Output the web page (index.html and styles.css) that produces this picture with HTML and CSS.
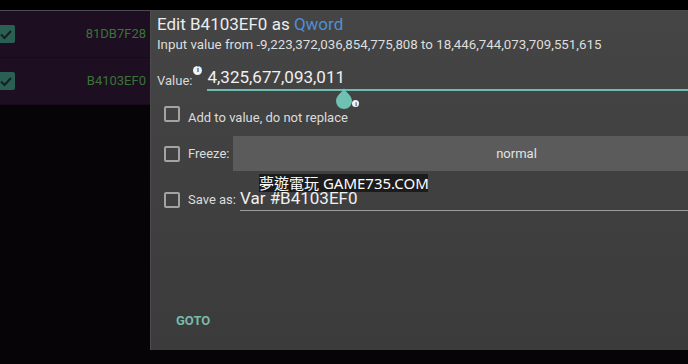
FILE: index.html
```html
<!DOCTYPE html>
<html lang="en">
<head>
    <meta charset="UTF-8">
    <meta name="viewport" content="width=device-width, initial-scale=1.0">
    <link rel="stylesheet" href="styles.css">
    <title>Edit value</title>
</head>
<body>
    <div class="screen">
        <div class="topbar"></div>

        <div class="list">
            <div class="row">
                <span class="tick">
                    <svg width="18" height="18" viewBox="0 0 18 18"><path d="M4 9.5 L7.5 13 L14 6" fill="none" stroke="#16201d" stroke-width="2"/></svg>
                </span>
                <span class="addr">81DB7F28</span>
            </div>
            <div class="row">
                <span class="tick">
                    <svg width="18" height="18" viewBox="0 0 18 18"><path d="M4 9.5 L7.5 13 L14 6" fill="none" stroke="#16201d" stroke-width="2"/></svg>
                </span>
                <span class="addr">B4103EF0</span>
            </div>
        </div>

        <div class="dialog">
            <h1 class="title">Edit B4103EF0 as <span class="type">Qword</span></h1>
            <p class="range">Input value from -9,223,372,036,854,775,808 to 18,446,744,073,709,551,615</p>

            <div class="value-row">
                <span class="value-label">Value:</span>
                <span class="info">i</span>
                <div class="value-field">
                    4,325,677,093,011
                    <svg class="handle" width="18" height="22" viewBox="0 0 18 22"><path d="M9 0 C10 4 17 7 17 13 A8 8 0 0 1 1 13 C1 7 8 4 9 0 Z" fill="#6fc1b2"/></svg>
                    <span class="info small">i</span>
                </div>
            </div>

            <div class="check-row add-row">
                <span class="box"></span>
                <span class="check-label">Add to value, do not replace</span>
            </div>

            <div class="check-row freeze-row">
                <span class="box"></span>
                <span class="check-label">Freeze:</span>
                <div class="spinner">normal</div>
            </div>

            <div class="check-row save-row">
                <span class="box"></span>
                <span class="check-label">Save as:</span>
                <div class="save-field">Var #B4103EF0</div>
            </div>

            <div class="actions">
                <span class="goto">GOTO</span>
            </div>
        </div>

        <div class="watermark">夢遊電玩 GAME735.COM</div>
    </div>
</body>
</html>
```

FILE: styles.css
```css
body {
    margin: 0;
    padding: 0;
    background-color: #000;
    font-family: Roboto, "Noto Sans", sans-serif;
    overflow: hidden;
}

.screen {
    position: relative;
    width: 688px;
    height: 364px;
    overflow: hidden;
    background-color: #070407;
}

.topbar {
    height: 10px;
    background-color: #000;
    border-bottom: 1px solid #4e4a50;
}

.list {
    background-color: #1e0e22;
}

.row {
    display: flex;
    align-items: center;
    width: 150px;
    height: 46px;
    border-bottom: 1px solid #170a1a;
}

.tick {
    display: flex;
    width: 18px;
    height: 18px;
    margin-left: -3px;
    background-color: #2a5f54;
    border-radius: 2px;
}

.addr {
    margin-left: auto;
    padding-right: 4px;
    font-size: 13px;
    line-height: 16px;
    color: #3a7436;
}

.dialog {
    position: absolute;
    left: 150px;
    top: 11px;
    width: 700px;
    height: 339px;
    box-sizing: border-box;
    padding: 3px 0 21px 6px;
    display: flex;
    flex-direction: column;
    background: linear-gradient(#454545, #3b3b3b);
    border-left: 1px solid #4c4c4c;
}

.title {
    margin: 0;
    font-size: 17px;
    font-weight: normal;
    line-height: 20px;
    color: #ececec;
}

.type {
    color: #4f8fd8;
}

.range {
    margin: 3px 0 0;
    font-size: 13.3px;
    line-height: 16px;
    color: #dedede;
}

.value-row {
    display: flex;
    align-items: flex-start;
    margin-top: 14px;
}

.value-label {
    margin-top: 6px;
    font-size: 13px;
    line-height: 16px;
    color: #d8d8d8;
}

.info {
    display: flex;
    align-items: center;
    justify-content: center;
    width: 9px;
    height: 9px;
    margin: -1px 0 0 1px;
    border-radius: 50%;
    background-color: #f2f2f2;
    color: #333;
    font-size: 7px;
    font-weight: bold;
    line-height: 9px;
}

.value-field {
    position: relative;
    flex: 1;
    margin-left: 5px;
    padding-bottom: 2px;
    font-size: 17px;
    line-height: 20px;
    color: #f0f0f0;
    border-bottom: 2px solid #6cbfb0;
}

.handle {
    position: absolute;
    left: 128px;
    top: 21px;
}

.info.small {
    position: absolute;
    left: 145px;
    top: 33px;
    width: 7px;
    height: 7px;
    margin: 0;
    font-size: 6px;
    line-height: 7px;
}

.check-row {
    display: flex;
    align-items: center;
    margin-left: 7px;
}

.box {
    width: 16px;
    height: 16px;
    box-sizing: border-box;
    margin-right: 8px;
    border: 2px solid #a3a3a3;
    border-radius: 2px;
    flex-shrink: 0;
}

.check-label {
    font-size: 13px;
    line-height: 16px;
    color: #dcdcdc;
}

.add-row {
    align-items: flex-start;
    margin-top: 15px;
}

.add-row .check-label {
    margin-top: 4px;
}

.freeze-row {
    margin-top: 10px;
}

.spinner {
    width: 566px;
    height: 35px;
    margin-left: 4px;
    background-color: #5b5b5b;
    font-size: 13px;
    line-height: 35px;
    text-align: center;
    color: #e2e2e2;
}

.save-row {
    margin-top: 17px;
}

.save-field {
    flex: 1;
    margin-left: 4px;
    padding-bottom: 2px;
    font-size: 17px;
    line-height: 20px;
    color: #f0f0f0;
    border-bottom: 1px solid #9c9c9c;
}

.actions {
    margin-top: auto;
    padding-left: 19px;
}

.goto {
    font-size: 13px;
    font-weight: bold;
    line-height: 16px;
    color: #79b9a6;
}

.watermark {
    position: absolute;
    left: 259px;
    top: 174px;
    width: 169px;
    height: 18px;
    background-color: #1c1c1c;
    color: #fff;
    font-family: "Noto Sans", "Noto Sans CJK TC", sans-serif;
    font-size: 15px;
    line-height: 18px;
    text-align: center;
    white-space: nowrap;
}
```
